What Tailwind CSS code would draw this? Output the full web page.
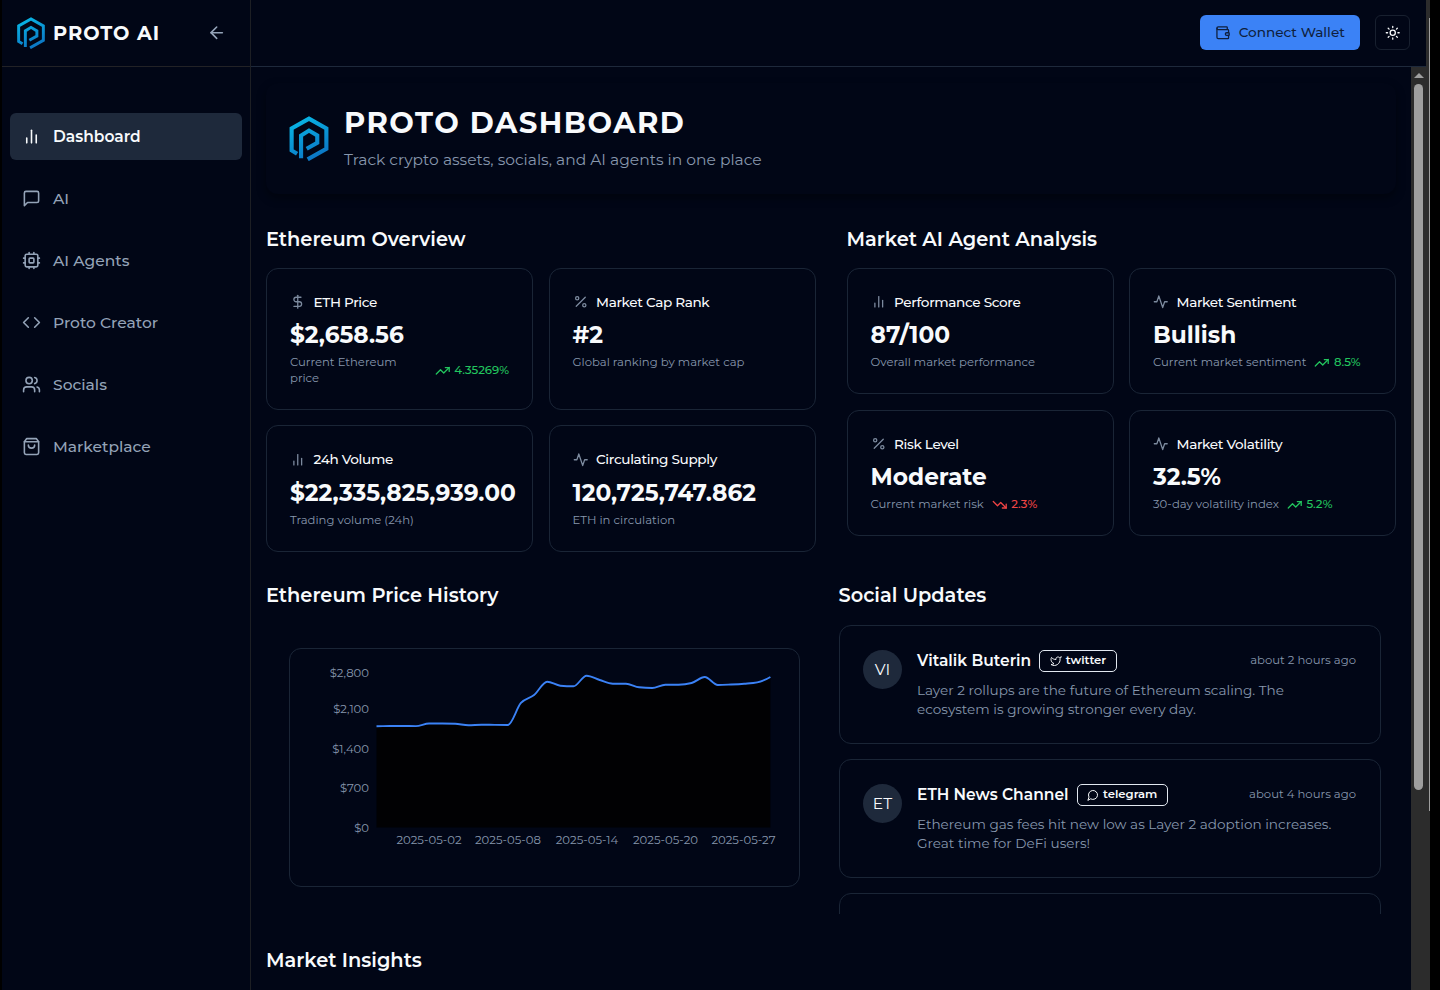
<!DOCTYPE html>
<html lang="en">
<head>
    <meta charset="UTF-8">
    <meta name="viewport" content="width=device-width, initial-scale=1.0">
    <title>Proto AI Dashboard</title>
    <script src="https://cdn.jsdelivr.net/npm/@tailwindcss/browser@4"></script>
</head>
<body class="h-screen overflow-hidden bg-black text-[#f8fafc] font-[Montserrat,Inter,sans-serif]">

    <!-- Icon sprites -->
    <svg class="absolute size-0">
        <defs>
            <linearGradient id="logoFill" gradientUnits="userSpaceOnUse" x1="40" y1="20" x2="100" y2="150">
                <stop offset="0" stop-color="#08b8e6"/>
                <stop offset="1" stop-color="#0c72c2"/>
            </linearGradient>
        </defs>
        <symbol id="logo" viewBox="14 17 118 136">
            <g fill="none" stroke="url(#logoFill)" stroke-width="12.5">
                <path d="M37 131 L20.500 121 V55 L73 25 L125.500 55 V116 L69 148"/>
                <path d="M49 145 V76 L73 61 L98 76 V98 L66 116"/>
            </g>
        </symbol>
        <symbol id="arrow-left" viewBox="0 0 24 24"><path d="m12 19-7-7 7-7"/><path d="M19 12H5"/></symbol>
        <symbol id="bars" viewBox="0 0 24 24"><path d="M18 20V10"/><path d="M12 20V4"/><path d="M6 20v-6"/></symbol>
        <symbol id="message" viewBox="0 0 24 24"><path d="M21 15a2 2 0 0 1-2 2H7l-4 4V5a2 2 0 0 1 2-2h14a2 2 0 0 1 2 2z"/></symbol>
        <symbol id="cpu" viewBox="0 0 24 24"><rect x="4" y="4" width="16" height="16" rx="2"/><rect x="9" y="9" width="6" height="6" rx="1"/><path d="M15 2v2M15 20v2M2 15h2M2 9h2M20 15h2M20 9h2M9 2v2M9 20v2"/></symbol>
        <symbol id="code" viewBox="0 0 24 24"><path d="m16 18 6-6-6-6"/><path d="m8 6-6 6 6 6"/></symbol>
        <symbol id="users" viewBox="0 0 24 24"><path d="M16 21v-2a4 4 0 0 0-4-4H6a4 4 0 0 0-4 4v2"/><circle cx="9" cy="7" r="4"/><path d="M22 21v-2a4 4 0 0 0-3-3.870"/><path d="M16 3.130a4 4 0 0 1 0 7.750"/></symbol>
        <symbol id="bag" viewBox="0 0 24 24"><path d="M6 2 3 6v14a2 2 0 0 0 2 2h14a2 2 0 0 0 2-2V6l-3-4Z"/><path d="M3 6h18"/><path d="M16 10a4 4 0 0 1-8 0"/></symbol>
        <symbol id="wallet" viewBox="0 0 24 24"><path d="M19 7V4a1 1 0 0 0-1-1H5a2 2 0 0 0 0 4h15a1 1 0 0 1 1 1v4h-3a2 2 0 0 0 0 4h3a1 1 0 0 0 1-1v-2a1 1 0 0 0-1-1"/><path d="M3 5v14a2 2 0 0 0 2 2h15a1 1 0 0 0 1-1v-4"/></symbol>
        <symbol id="sun" viewBox="0 0 24 24"><circle cx="12" cy="12" r="4"/><path d="M12 2v2M12 20v2M4.930 4.930l1.410 1.410M17.660 17.660l1.410 1.410M2 12h2M20 12h2M6.340 17.660l-1.410 1.410M19.070 4.930l-1.410 1.410"/></symbol>
        <symbol id="dollar" viewBox="0 0 24 24"><path d="M12 2v20"/><path d="M17 5H9.500a3.500 3.500 0 0 0 0 7h5a3.500 3.500 0 0 1 0 7H6"/></symbol>
        <symbol id="percent" viewBox="0 0 24 24"><path d="M19 5 5 19"/><circle cx="6.500" cy="6.500" r="2.500"/><circle cx="17.500" cy="17.500" r="2.500"/></symbol>
        <symbol id="activity" viewBox="0 0 24 24"><path d="M22 12h-4l-3 9L9 3l-3 9H2"/></symbol>
        <symbol id="trend-up" viewBox="0 0 24 24"><path d="m22 7-8.500 8.500-5-5L2 17"/><path d="M16 7h6v6"/></symbol>
        <symbol id="trend-down" viewBox="0 0 24 24"><path d="m22 17-8.500-8.500-5 5L2 7"/><path d="M16 17h6v-6"/></symbol>
        <symbol id="twitter" viewBox="0 0 24 24"><path d="M22 4s-.7 2.100-2 3.400c1.600 10-9.400 17.300-18 11.600 2.200.1 4.400-.6 6-2C3 15.500.5 9.600 3 5c2.200 2.600 5.600 4.100 9 4-.9-4.200 4-6.600 7-3.800 1.100 0 3-1.200 3-1.200z"/></symbol>
        <symbol id="chat" viewBox="0 0 24 24"><path d="M7.900 20A9 9 0 1 0 4 16.100L2 22Z"/></symbol>
    </svg>

    <div class="flex h-full">
        <!-- Sidebar -->
        <aside class="ml-0.5 flex w-[249px] shrink-0 flex-col border-r border-[#1d1f24] bg-[#010616]">
            <div class="flex h-[67px] items-center border-b border-[#222226] pl-[15px] pr-[24px]">
                <svg class="h-8 w-7"><use href="#logo"/></svg>
                <span class="ml-2 pt-px whitespace-nowrap text-[19.4px] font-bold tracking-wider">PROTO AI</span>
                <svg class="ml-auto size-[19.4px] fill-none stroke-[#94a3b8] stroke-2 [stroke-linecap:round] [stroke-linejoin:round]"><use href="#arrow-left"/></svg>
            </div>
            <nav id="nav" class="mt-[46.4px] flex flex-col gap-[15.5px] px-2"></nav>
        </aside>

        <div class="flex w-[1175px] shrink-0 flex-col bg-[#010616]">
            <!-- Top bar -->
            <header class="flex h-[67px] shrink-0 items-center justify-end gap-[15px] border-b border-[#1e293b] pr-4 pb-px">
                <button class="flex h-[35px] w-[160px] items-center justify-center gap-2 rounded-md bg-[#3b82f6] text-[13.6px] font-medium text-[#0f1f3d]">
                    <svg class="size-[15.5px] fill-none stroke-current stroke-2 [stroke-linecap:round] [stroke-linejoin:round]"><use href="#wallet"/></svg>
                    Connect Wallet
                </button>
                <button class="flex size-[35px] items-center justify-center rounded-md border border-[#18202f]">
                    <svg class="size-[15.5px] fill-none stroke-[#f8fafc] stroke-2 [stroke-linecap:round] [stroke-linejoin:round]"><use href="#sun"/></svg>
                </button>
            </header>

            <div class="flex min-h-0 flex-1">
                <main class="w-[1160px] overflow-hidden px-[15px] pt-4">
                    <!-- Banner -->
                    <section class="flex h-[111px] items-center rounded-xl pl-[23px] shadow-[0_4px_10px_0_rgba(0,0,0,0.4)]">
                        <svg class="h-[45px] w-10"><use href="#logo"/></svg>
                        <div class="-mt-px ml-[15px]">
                            <h1 class="text-[29.1px] leading-[38px] font-bold tracking-wider">PROTO DASHBOARD</h1>
                            <p class="mt-[6px] text-[15.5px] leading-6 text-[#8797ad]">Track crypto assets, socials, and AI agents in one place</p>
                        </div>
                    </section>

                    <div class="mt-[31px] grid grid-cols-2 gap-[31px]">
                        <section>
                            <h2 class="text-[19.4px] leading-7 font-semibold">Ethereum Overview</h2>
                            <div id="overview" class="mt-[15px] grid grid-cols-2 gap-[15.5px]"></div>
                        </section>
                        <section>
                            <h2 class="text-[19.4px] leading-7 font-semibold">Market AI Agent Analysis</h2>
                            <div id="analysis" class="mt-[15px] grid grid-cols-2 gap-[15.5px]"></div>
                        </section>
                    </div>

                    <div class="mt-[29.5px] grid grid-cols-2 gap-[15px]">
                        <!-- Price history -->
                        <section>
                            <h2 class="text-[19.4px] leading-7 font-semibold">Ethereum Price History</h2>
                            <div class="mt-4 h-[285px] p-[23px]">
                                <div class="h-[239px] w-[511px] rounded-xl border border-[#1a2536]">
                                    <svg id="chart" viewBox="0 0 509 237" class="h-[237px] w-[509px]"></svg>
                                </div>
                            </div>
                        </section>

                        <!-- Social feed -->
                        <section>
                            <h2 class="text-[19.4px] leading-7 font-semibold">Social Updates</h2>
                            <div id="feed" class="mt-4 flex h-[289px] w-[542px] flex-col gap-[15.5px] overflow-hidden"></div>
                        </section>
                    </div>

                    <h2 class="mt-8 text-[19.4px] leading-7 font-semibold">Market Insights</h2>
                </main>

                <!-- Main scrollbar -->
                <div class="flex w-[15px] flex-col items-center bg-[#2c2c2c] pt-[6px]">
                    <div class="border-x-[5px] border-b-[5px] border-x-transparent border-b-[#9f9f9f]"></div>
                    <div class="mt-[6px] h-[706px] w-[9px] rounded-full bg-[#9f9f9f]"></div>
                </div>
            </div>
        </div>

        <!-- Page scrollbar -->
        <div class="flex w-1 justify-end bg-[#2c2c2c] pt-[18px]">
            <div class="h-[793px] w-px bg-[#9f9f9f]"></div>
        </div>
    </div>

    <script>
        const icon = (name, cls) => `<svg class="shrink-0 fill-none stroke-current stroke-2 [stroke-linecap:round] [stroke-linejoin:round] ${cls}"><use href="#${name}"/></svg>`;

        const nav = [
            ['bars', 'Dashboard'],
            ['message', 'AI'],
            ['cpu', 'AI Agents'],
            ['code', 'Proto Creator'],
            ['users', 'Socials'],
            ['bag', 'Marketplace'],
        ];
        document.getElementById('nav').innerHTML = nav.map(([name, label], i) => `
            <a class="flex h-[46.5px] items-center gap-3 rounded-md pl-3 text-[15.5px] ${i === 0 ? 'bg-[#1e293b] font-semibold' : 'font-medium text-[#94a3b8]'}">
                ${icon(name, 'size-[19px]')}
                <span class="pb-px">${label}</span>
            </a>
        `).join('');

        // icon, title, value, note, change, change is a drop
        const overview = [
            ['dollar', 'ETH Price', '$2,658.56', 'Current Ethereum price', '4.35269%'],
            ['percent', 'Market Cap Rank', '#2', 'Global ranking by market cap'],
            ['bars', '24h Volume', '$22,335,825,939.00', 'Trading volume (24h)'],
            ['activity', 'Circulating Supply', '120,725,747.862', 'ETH in circulation'],
        ];
        const analysis = [
            ['bars', 'Performance Score', '87/100', 'Overall market performance'],
            ['activity', 'Market Sentiment', 'Bullish', 'Current market sentiment', '8.5%'],
            ['percent', 'Risk Level', 'Moderate', 'Current market risk', '2.3%', true],
            ['activity', 'Market Volatility', '32.5%', '30-day volatility index', '5.2%'],
        ];
        const statCard = ([name, title, value, note, change, down]) => `
            <div class="min-w-0 rounded-xl border border-[#1a2536] px-[23px] pt-[23.2px] pb-[22.8px]">
                <div class="flex h-5 items-center gap-2 text-[13.6px] font-medium tracking-tight whitespace-nowrap">
                    <span class="text-[#7c8a9e]">${icon(name, 'size-[15.5px]')}</span>
                    ${title}
                </div>
                <div class="mt-[7px] text-[23.3px] leading-[31px] font-bold whitespace-nowrap">${value}</div>
                <div class="mt-[5px] flex items-center gap-2">
                    <p class="text-[11.65px] leading-[15.5px] text-[#8797ad]">${note}</p>
                    ${change ? `<span class="flex items-center gap-1 text-[11.65px] leading-[15.5px] font-medium ${down ? 'text-[#ef4444]' : 'text-[#22c55e]'}">${icon(down ? 'trend-down' : 'trend-up', 'size-[15.5px]')}${change}</span>` : ''}
                </div>
            </div>
        `;
        document.getElementById('overview').innerHTML = overview.map(statCard).join('');
        document.getElementById('analysis').innerHTML = analysis.map(statCard).join('');

        const posts = [
            ['VI', 'Vitalik Buterin', 'twitter', 'twitter', 'about 2 hours ago', 'Layer 2 rollups are the future of Ethereum scaling. The<br>ecosystem is growing stronger every day.'],
            ['ET', 'ETH News Channel', 'chat', 'telegram', 'about 4 hours ago', 'Ethereum gas fees hit new low as Layer 2 adoption increases.<br>Great time for DeFi users!'],
        ];
        document.getElementById('feed').innerHTML = posts.map(([initials, name, ico, source, time, text]) => `
            <div class="flex h-[118.5px] shrink-0 gap-[15px] rounded-xl border border-[#1a2536] p-[23.5px]">
                <div class="flex size-[39px] shrink-0 items-center justify-center rounded-full bg-[#1e293b] text-[15.5px]">${initials}</div>
                <div class="flex-1 whitespace-nowrap">
                    <div class="flex h-[22px] items-center">
                        <span class="text-[15.5px] font-semibold">${name}</span>
                        <span class="ml-2 flex h-[22px] items-center gap-1 rounded-[5px] border border-[#e2e8f0] px-[9.5px] text-[11.65px] font-semibold">${icon(ico, 'size-[12px]')}${source}</span>
                        <span class="ml-auto text-[11.65px] text-[#8797ad]">${time}</span>
                    </div>
                    <p class="mt-[9px] text-[13.6px] leading-[19.4px] text-[#8797ad]">${text}</p>
                </div>
            </div>
        `).join('') + '<div class="h-[118px] shrink-0 rounded-xl border border-[#1a2536]"></div>';

        // Price chart
        const prices = [1778, 1783, 1783, 1781, 1827, 1827, 1822, 1795, 1806, 1802, 1800, 2187, 2327, 2561, 2491, 2480, 2666, 2591, 2526, 2526, 2463, 2450, 2508, 2508, 2538, 2644, 2503, 2512, 2526, 2550, 2644];
        const left = 86.5, step = 13.13, base = 178.5;
        const pts = prices.map((p, i) => [left + i * step, base - p * 0.05693]);
        const slope = pts.map((p, i) => {
            if (i === 0 || i === pts.length - 1) return 0;
            const a = (p[1] - pts[i - 1][1]) / step;
            const b = (pts[i + 1][1] - p[1]) / step;
            return (Math.sign(a) + Math.sign(b)) * Math.min(Math.abs(a), Math.abs(b), 0.25 * Math.abs(a + b));
        });
        slope[pts.length - 1] = -0.6;
        let line = `M${pts[0]}`;
        for (let i = 1; i < pts.length; i++) {
            const [x0, y0] = pts[i - 1], [x1, y1] = pts[i], d = step / 3;
            line += `C${x0 + d},${y0 + d * slope[i - 1]} ${x1 - d},${y1 - d * slope[i]} ${x1},${y1}`;
        }
        const yTicks = [['$2,800', 23.5], ['$2,100', 59.5], ['$1,400', 99.5], ['$700', 139], ['$0', 178.5]];
        const xTicks = [['2025-05-02', 139], ['2025-05-08', 218], ['2025-05-14', 297], ['2025-05-20', 375.5], ['2025-05-27', 453.5]];
        document.getElementById('chart').innerHTML = `
            <path d="${line}V${base}H${left}Z" fill="#010103"/>
            <path d="${line}" fill="none" stroke="#3b82f6" stroke-width="1.9"/>
            <g class="fill-[#8797ad] text-[11.65px]">
                ${yTicks.map(([t, y]) => `<text x="79" y="${y + 4}" text-anchor="end">${t}</text>`).join('')}
                ${xTicks.map(([t, x]) => `<text x="${x}" y="194.5" text-anchor="middle">${t}</text>`).join('')}
            </g>
        `;
    </script>
</body>
</html>
